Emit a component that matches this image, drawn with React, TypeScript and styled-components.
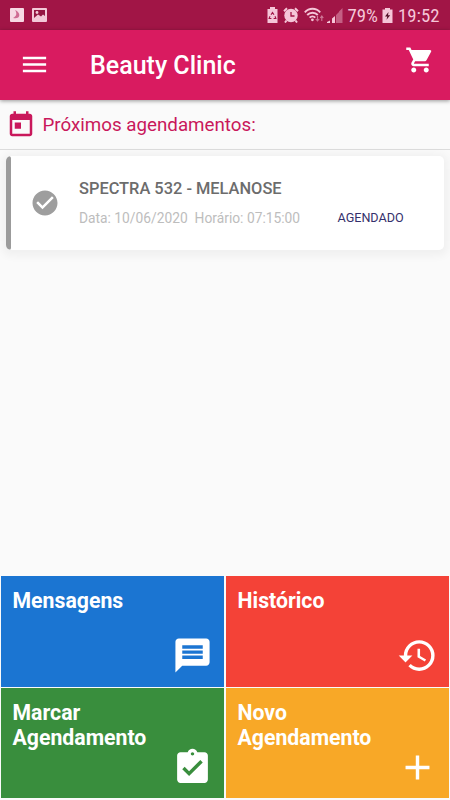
import React from "react";
import styled, { createGlobalStyle } from "styled-components";

const GlobalStyle = createGlobalStyle`
  * { box-sizing: border-box; }
  body { margin: 0; background: #fafafa; font-family: Roboto, "Liberation Sans", sans-serif; }
  svg { display: block; flex: none; }
`;

const Screen = styled.div`
  width: 450px;
  height: 800px;
  display: flex;
  flex-direction: column;
  overflow: hidden;
  background: #fafafa;
`;

const StatusBar = styled.div`
  height: 30px;
  flex: none;
  display: flex;
  align-items: center;
  justify-content: space-between;
  padding: 0 10px 0 9px;
  background: #a11546;
  color: #f5c6d8;
`;

const StatusGroup = styled.div`
  display: flex;
  align-items: center;
`;

const StatusText = styled.span<{ $width: number }>`
  width: ${(p) => p.$width}px;
  font-family: "Roboto Condensed", Roboto, sans-serif;
  font-size: 18.8px;
  line-height: 32px;
  padding-top: 1px;
  white-space: nowrap;
`;

const AppBar = styled.header`
  height: 70px;
  flex: none;
  display: flex;
  padding: 0 15px 0 19px;
  background: #d91b60;
  color: #fff;
  box-shadow: 0 1px 4px rgba(0, 0, 0, 0.4);
  z-index: 1;
`;

const MenuButton = styled.div`
  padding-top: 19px;
`;

const Title = styled.h1`
  flex: 1;
  margin: 0 0 0 40px;
  font-size: 25px;
  font-weight: 500;
  line-height: 72px;
`;

const CartButton = styled.div`
  padding-top: 15px;
`;

const SectionHeader = styled.div`
  height: 50px;
  flex: none;
  display: flex;
  align-items: center;
  gap: 6.5px;
  padding: 0 6px;
  border-bottom: 1px solid #dcdcdc;
  color: #c9185b;
`;

const SectionTitle = styled.h2`
  margin: 0;
  font-size: 18.75px;
  font-weight: 400;
  line-height: 48px;
`;

const Appointments = styled.main`
  flex: 1;
  padding: 6px;
`;

const Card = styled.article`
  height: 94px;
  display: flex;
  background: #fff;
  border-radius: 5px;
  overflow: hidden;
  box-shadow: 0 2px 9px 4px rgba(0, 0, 0, 0.045);
`;

const Stripe = styled.div`
  width: 5px;
  background: #9b9b9b;
  border-radius: 3px;
`;

const CheckSlot = styled.div`
  width: 68px;
  padding: 32px 0 0 19px;
  color: #9e9e9e;
`;

const CardBody = styled.div`
  flex: 1;
  padding-top: 22px;
`;

const Procedure = styled.div`
  font-size: 16.4px;
  font-weight: 500;
  line-height: 22px;
  color: #6c6c6c;
`;

const Details = styled.div`
  display: flex;
  margin-top: 7px;
  line-height: 22px;
  font-size: 13.8px;
  color: #bdbdbd;
  white-space: pre;
`;

const When = styled.span`
  width: 258.5px;
`;

const Status = styled.span`
  font-size: 12.6px;
  color: #35306c;
`;

const Tiles = styled.nav`
  flex: none;
  display: grid;
  grid-template-columns: 223px 223px;
  grid-template-rows: 111px 110px;
  gap: 1px 2px;
  padding: 0 1px 2px;
`;

const Tile = styled.a<{ $color: string; $bottom: number }>`
  display: flex;
  justify-content: space-between;
  padding: 12px 11px ${(p) => p.$bottom}px 11.5px;
  background: ${(p) => p.$color};
  color: #fff;
`;

const TileLabel = styled.span`
  width: 140px;
  font-size: 21.25px;
  font-weight: 700;
  line-height: 25px;
`;

const TileIcon = styled.div`
  align-self: flex-end;
`;

const Spacer = styled.div<{ $w: number }>`
  width: ${(p) => p.$w}px;
`;

const Icon = ({ d, size }: { d: string; size: number }) => (
  <svg width={size} height={size} viewBox="0 0 24 24" fill="currentColor" fillRule="evenodd">
    <path d={d} />
  </svg>
);

const paths = {
  menu: "M3 18h18v-2H3v2zm0-5h18v-2H3v2zm0-7v2h18V6H3z",
  cart: "M7 18c-1.1 0-1.99.9-1.99 2S5.9 22 7 22s2-.9 2-2-.9-2-2-2zM1 2v2h2l3.6 7.59-1.35 2.45c-.16.28-.25.61-.25.96 0 1.1.9 2 2 2h12v-2H7.42c-.14 0-.25-.11-.25-.25l.03-.12.9-1.63h7.45c.75 0 1.41-.41 1.75-1.03l3.58-6.49A1 1 0 0 0 20 4H5.21l-.94-2H1zm16 16c-1.1 0-1.99.9-1.99 2s.89 2 1.99 2 2-.9 2-2-.9-2-2-2z",
  today: "M19 3h-1V1h-2v2H8V1H6v2H5c-1.11 0-1.99.9-1.99 2L3 19c0 1.1.89 2 2 2h14c1.1 0 2-.9 2-2V5c0-1.1-.9-2-2-2zm0 16H5V8h14v11zM7 10h5v5H7z",
  check: "M12 2C6.48 2 2 6.48 2 12s4.48 10 10 10 10-4.48 10-10S17.52 2 12 2zm-2 15l-5-5 1.41-1.41L10 14.17l7.59-7.59L19 8l-9 9z",
  message: "M20 2H4c-1.1 0-1.99.9-1.99 2L2 22l4-4h14c1.1 0 2-.9 2-2V4c0-1.1-.9-2-2-2zm-2 12H6v-2h12v2zm0-3H6V9h12v2zm0-3H6V6h12v2z",
  history: "M13 3a9 9 0 0 0-9 9H1l3.89 3.89.07.14L9 12H6c0-3.87 3.13-7 7-7s7 3.13 7 7-3.13 7-7 7c-1.93 0-3.68-.79-4.94-2.06l-1.42 1.42A8.954 8.954 0 0 0 13 21a9 9 0 0 0 0-18zm-1 5v5l4.28 2.54.72-1.21-3.5-2.08V8H12z",
  assignment: "M19 3h-4.18C14.4 1.84 13.3 1 12 1s-2.4.84-2.82 2H5c-1.1 0-2 .9-2 2v14c0 1.1.9 2 2 2h14c1.1 0 2-.9 2-2V5c0-1.1-.9-2-2-2zm-7 0c.55 0 1 .45 1 1s-.45 1-1 1-1-.45-1-1 .45-1 1-1zm-2 14l-4-4 1.41-1.41L10 14.17l6.59-6.59L18 9l-8 8z",
  add: "M19 13h-6v6h-2v-6H5v-2h6V5h2v6h6v2z",
};

const NotificationIcons = () => (
  <svg width="39" height="16" viewBox="0 0 39 16">
    <rect x="1" y="1" width="14" height="14" rx="1" fill="#f7d9e4" />
    <path d="M6 3c2 3 2 6-2 8 7 2 9-5 2-8z" fill="#cf6c93" />
    <rect x="23" y="1" width="15" height="14" rx="1" fill="#f3c9d8" />
    <path d="M25 3h11v6l-2-1.5-2 2-3-2-4 3.5z" fill="#941642" />
    <circle cx="28" cy="5.5" r="1.4" fill="#f3c9d8" />
  </svg>
);

const BatterySaver = () => (
  <svg width="11" height="16" viewBox="0 0 11 16">
    <path d="M3 0h5v2h2.5v14H.5V2H3z" fill="currentColor" />
    <path d="M4 7.8l1.5-2.2L7 7.8M8 9.2l.9 2.3H6.6M4.4 11.5H2.1L3 9.2" fill="none" stroke="#a11546" strokeWidth="1.1" />
  </svg>
);

const Alarm = () => (
  <svg width="16" height="16" viewBox="0 0 16 16">
    <circle cx="8" cy="8.5" r="6.7" fill="currentColor" />
    <path d="M1 4.2L4 1.3M15 4.2l-3-2.9M3.5 13.5L2 15.5M12.5 13.5l1.5 2" stroke="currentColor" strokeWidth="2" />
    <path d="M8 5v4h3.5" fill="none" stroke="#a11546" strokeWidth="1.3" />
  </svg>
);

const Wifi = () => (
  <svg width="20" height="16" viewBox="0 0 20 16" fill="none" stroke="currentColor" strokeWidth="1.9">
    <path d="M.8 5.3C5 .6 12 .6 16.2 5.3M3.2 8C6 5 11 5 13.8 8M5.6 10.7c1.7-1.7 4-1.7 5.7 0" />
    <circle cx="8.4" cy="12.8" r="1.4" fill="currentColor" stroke="none" />
    <path d="M13.5 9v5m-1.7-2l1.7 2 1.7-2M17.8 14V9m-1.5 2l1.5-2 1.5 2" strokeWidth="1.1" opacity=".55" />
  </svg>
);

const Signal = () => (
  <svg width="16" height="15" viewBox="0 0 16 15" fill="currentColor">
    <path d="M0 14L3 12.5V15H0zM5 10.5l3-2.5v7H5z" />
    <path d="M9 7l3-3v11H9zM12 3.5L15.5 0v15H12z" opacity=".42" />
  </svg>
);

const Charging = () => (
  <svg width="11" height="15" viewBox="0 0 11 15">
    <path d="M3 0h5v1.5h2.5V15H.5V1.5H3z" fill="currentColor" />
    <path d="M6.5 4L3 8.5h2.3l-.8 3.2L8.2 7.3H6z" fill="#521027" />
  </svg>
);

const tiles = [
  { label: "Mensagens", color: "#1b75d2", d: paths.message, bottom: 11.5 },
  { label: "Histórico", color: "#f44237", d: paths.history, bottom: 11.5 },
  { label: "Marcar Agendamento", color: "#398e3d", d: paths.assignment, bottom: 10 },
  { label: "Novo Agendamento", color: "#f8a827", d: paths.add, bottom: 10 },
];

export default function App() {
  return (
    <>
      <GlobalStyle />
      <Screen>
        <StatusBar>
          <NotificationIcons />
          <StatusGroup>
            <BatterySaver />
            <Spacer $w={5} />
            <Alarm />
            <Spacer $w={5} />
            <Wifi />
            <Spacer $w={3} />
            <Signal />
            <Spacer $w={4.5} />
            <StatusText $width={34.5}>79%</StatusText>
            <Charging />
            <Spacer $w={5} />
            <StatusText $width={42}>19:52</StatusText>
          </StatusGroup>
        </StatusBar>
        <AppBar>
          <MenuButton><Icon d={paths.menu} size={31} /></MenuButton>
          <Title>Beauty Clinic</Title>
          <CartButton><Icon d={paths.cart} size={30} /></CartButton>
        </AppBar>
        <SectionHeader>
          <Icon d={paths.today} size={30} />
          <SectionTitle>Próximos agendamentos:</SectionTitle>
        </SectionHeader>
        <Appointments>
          <Card>
            <Stripe />
            <CheckSlot><Icon d={paths.check} size={30} /></CheckSlot>
            <CardBody>
              <Procedure>SPECTRA 532 - MELANOSE</Procedure>
              <Details>
                <When>{"Data: 10/06/2020  Horário: 07:15:00"}</When>
                <Status>AGENDADO</Status>
              </Details>
            </CardBody>
          </Card>
        </Appointments>
        <Tiles>
          {tiles.map((t) => (
            <Tile key={t.label} $color={t.color} $bottom={t.bottom}>
              <TileLabel>{t.label}</TileLabel>
              <TileIcon><Icon d={t.d} size={41} /></TileIcon>
            </Tile>
          ))}
        </Tiles>
      </Screen>
    </>
  );
}
